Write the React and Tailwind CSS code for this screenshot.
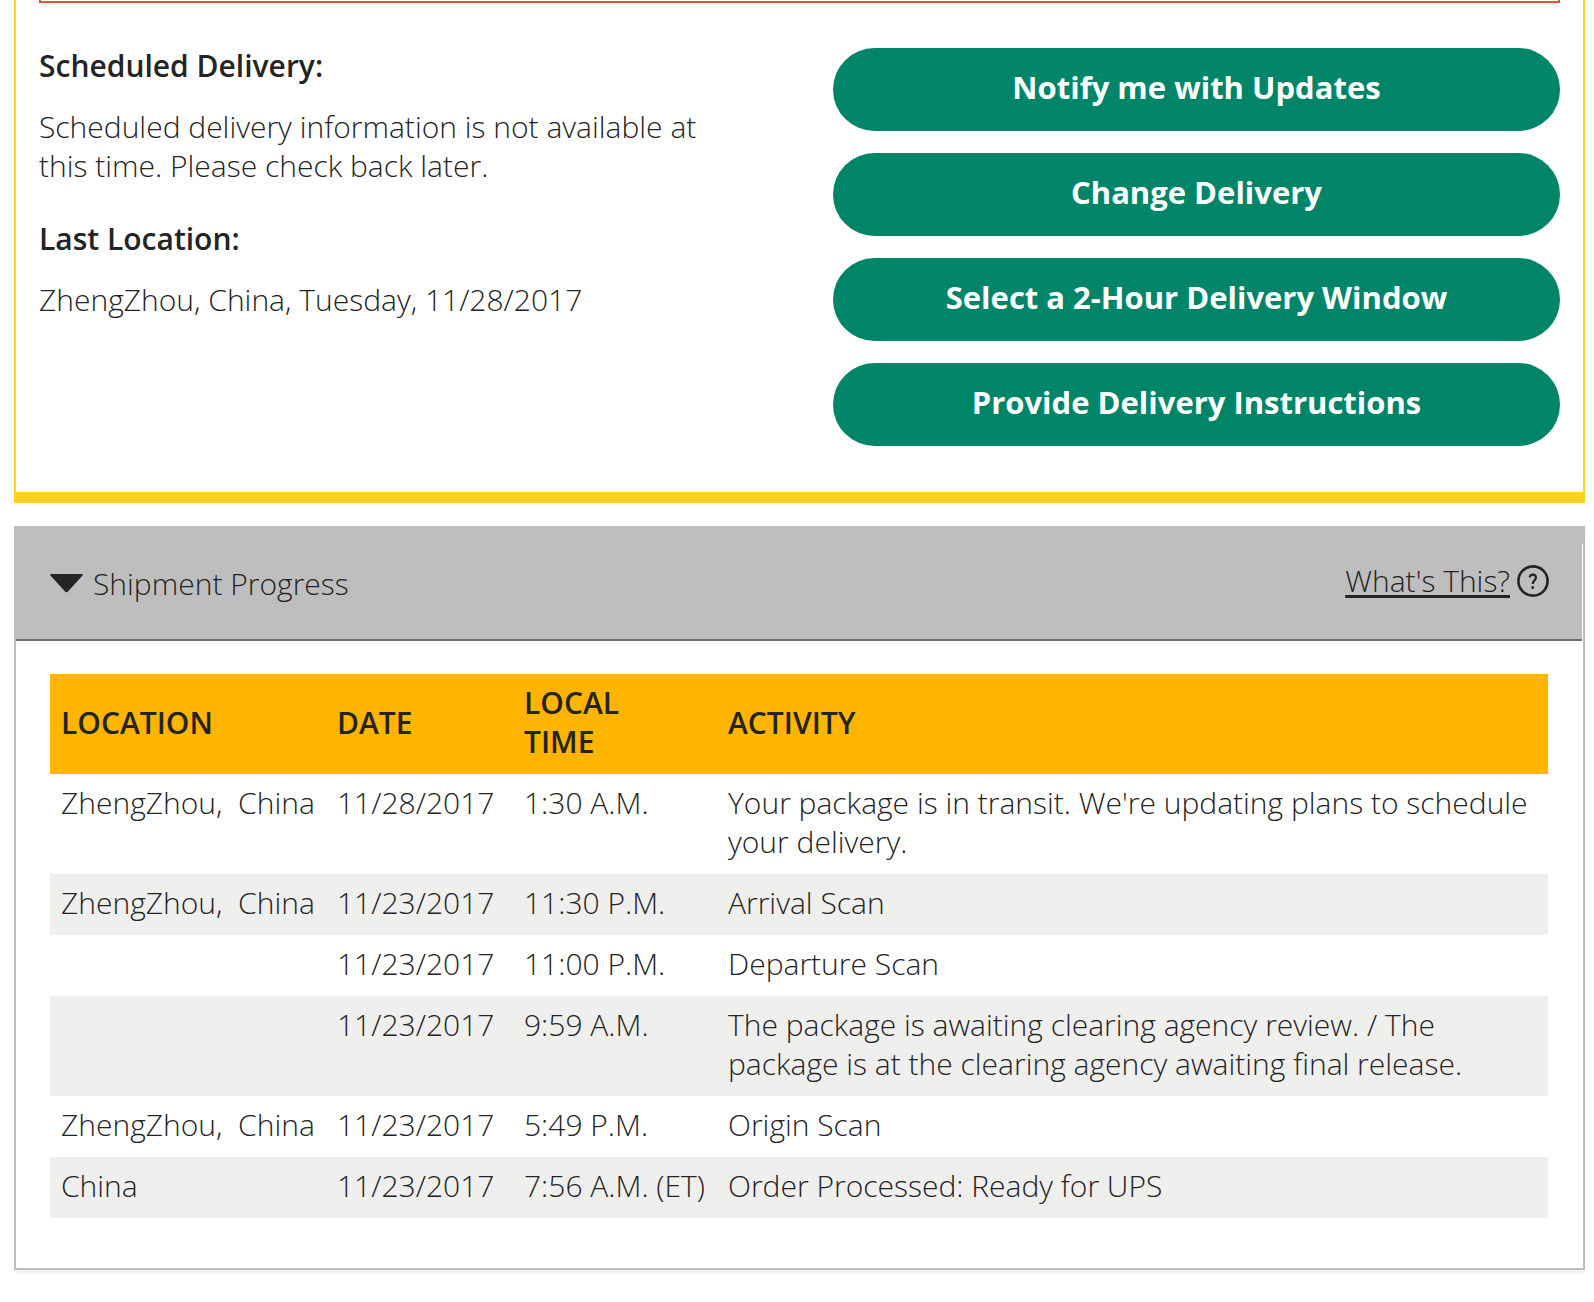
import React from 'react';

const actions = [
  'Notify me with Updates',
  'Change Delivery',
  'Select a 2-Hour Delivery Window',
  'Provide Delivery Instructions',
];

const progress = [
  {
    location: 'ZhengZhou,\u00a0 China',
    date: '11/28/2017',
    time: '1:30 A.M.',
    activity: "Your package is in transit. We're updating plans to schedule your delivery.",
  },
  { location: 'ZhengZhou,\u00a0 China', date: '11/23/2017', time: '11:30 P.M.', activity: 'Arrival Scan' },
  { location: '', date: '11/23/2017', time: '11:00 P.M.', activity: 'Departure Scan' },
  {
    location: '',
    date: '11/23/2017',
    time: '9:59 A.M.',
    activity:
      'The package is awaiting clearing agency review. / The package is at the clearing agency awaiting final release.',
  },
  { location: 'ZhengZhou,\u00a0 China', date: '11/23/2017', time: '5:49 P.M.', activity: 'Origin Scan' },
  { location: 'China', date: '11/23/2017', time: '7:56 A.M. (ET)', activity: 'Order Processed: Ready for UPS' },
];

const DeliverySummary = () => (
  <section className="border-x-2 border-b-[11px] border-[#ffd124] px-[23px] pb-[46px]">
    {/* Bottom edge of the alert */}
    <div className="h-[3px] border-x-2 border-b-2 border-[#e35629] shadow-[0_3px_2px_rgba(0,0,0,0.04)]" />

    <div className="grid grid-cols-[minmax(0,700px)_minmax(0,727px)] justify-between">
      <div className="pt-[43px]">
        <h2 className="font-semibold">Scheduled Delivery:</h2>
        <p className="mt-[22px]">
          Scheduled delivery information is not available at this time. Please check back later.
        </p>
        <h2 className="mt-[34px] font-semibold">Last Location:</h2>
        <p className="mt-[22px]">ZhengZhou, China, Tuesday, 11/28/2017</p>
      </div>

      <div className="flex flex-col gap-[22px] pt-[45px]">
        {actions.map((label) => (
          <button
            key={label}
            type="button"
            className="h-[83px] rounded-full bg-[#008568] pb-1 text-[31px] font-bold text-white"
          >
            {label}
          </button>
        ))}
      </div>
    </div>
  </section>
);

const ShipmentProgress = () => (
  <section className="mt-[23px] border-2 border-t-[18px] border-[#bebebe] pb-[50px] shadow-[0_4px_3px_rgba(0,0,0,0.05)]">
    <div className="mr-px flex h-[97px] items-center justify-between border-b-2 border-[#6d6e6d] bg-[#bebebe] pr-[33px] pb-4 pl-[34px]">
      <button type="button" className="flex items-center gap-[10px]">
        <svg width="33" height="20" viewBox="0 0 33 20" fill="#242424" aria-hidden="true">
          <path d="M1 0h31q1.4.3.5 1.4L18 17.6q-1.5 1.6-3 0L.5 1.4Q-.4.3 1 0z" />
        </svg>
        Shipment Progress
      </button>
      <a href="#whats-this" className="flex items-center gap-[7px] pb-[6px]">
        <span className="underline decoration-[3px] underline-offset-[3px]">What's This?</span>
        <svg width="32" height="32" viewBox="0 0 32 32" fill="none" stroke="#242424" aria-hidden="true">
          <circle cx="16" cy="16" r="14.6" strokeWidth="2.6" />
          <path d="M12.7 12.4c.2-1.7 1.3-2.7 3.1-2.7 1.9 0 3.1 1.1 3.1 2.9 0 2.9-3.2 2.9-3.2 6.4" strokeWidth="2.2" />
          <path d="M15.7 21.2v2.6" strokeWidth="2.5" />
        </svg>
      </a>
    </div>

    <div className="pt-[33px] pr-[35px] pl-[34px]">
      <table className="w-full table-fixed text-left">
        <colgroup>
          <col className="w-[276px]" />
          <col className="w-[187px]" />
          <col className="w-[204px]" />
          <col />
        </colgroup>
        <thead className="bg-[#ffb500]">
          <tr>
            <th className="px-[11px] pt-[9px] pb-[13px] font-semibold">LOCATION</th>
            <th className="px-[11px] pt-[9px] pb-[13px] font-semibold">DATE</th>
            <th className="px-[11px] pt-[9px] pb-[13px] font-semibold">
              LOCAL
              <br />
              TIME
            </th>
            <th className="px-[11px] pt-[9px] pb-[13px] font-semibold">ACTIVITY</th>
          </tr>
        </thead>
        <tbody>
          {progress.map((row, index) => (
            <tr key={index} className="align-top even:bg-[#efefed]">
              <td className="pt-[9px] pb-[13px] pl-[11px] whitespace-nowrap">{row.location}</td>
              <td className="pt-[9px] pb-[13px] pl-[11px] whitespace-nowrap">{row.date}</td>
              <td className="pt-[9px] pb-[13px] pl-[11px] whitespace-nowrap">{row.time}</td>
              <td className="px-[11px] pt-[9px] pb-[13px]">{row.activity}</td>
            </tr>
          ))}
        </tbody>
      </table>
    </div>
  </section>
);

const App = () => {
  return (
    <main className="min-h-screen bg-white pr-[9px] pb-8 pl-[14px] font-['Open_Sans',sans-serif] text-[30px] leading-[39px] font-light text-[#242424]">
      <DeliverySummary />
      <ShipmentProgress />
    </main>
  );
};

export default App;
